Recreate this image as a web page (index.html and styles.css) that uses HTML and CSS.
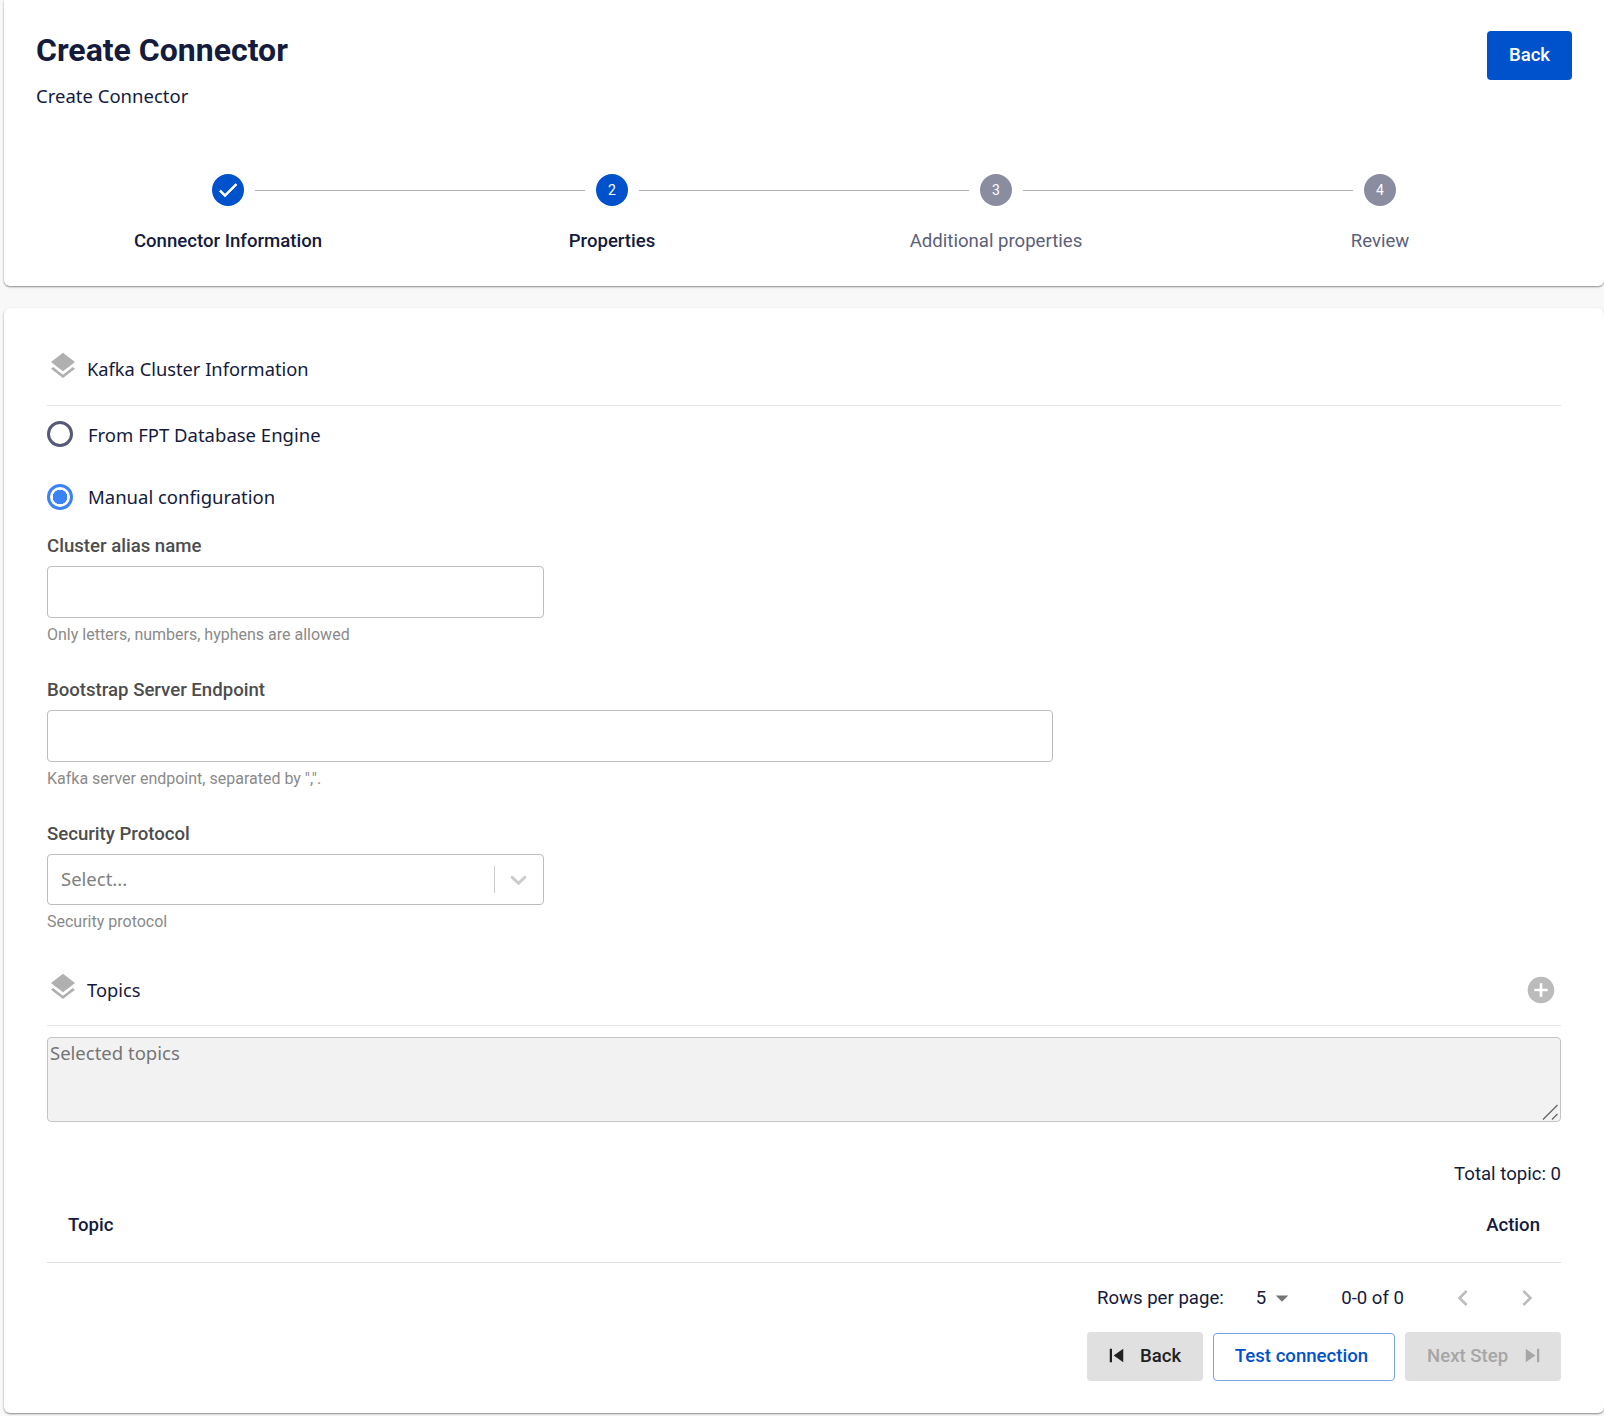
FILE: index.html
```html
<!DOCTYPE html>
<html lang="en">
<head>
    <meta charset="UTF-8">
    <meta name="viewport" content="width=device-width, initial-scale=1.0">
    <title>Create Connector</title>
    <link rel="stylesheet" href="styles.css">
</head>
<body>
    <div class="card header-card">
        <div class="page-head">
            <div>
                <h1>Create Connector</h1>
                <p class="subtitle">Create Connector</p>
            </div>
            <button type="button" class="btn btn-primary">Back</button>
        </div>

        <div class="stepper">
            <div class="step">
                <span class="step-icon active">
                    <svg width="24" height="24" viewBox="0 0 24 24"><path fill="#fff" stroke="#fff" stroke-width="0.7" d="M9 16.2 4.8 12l-1.4 1.4L9 19 21 7l-1.4-1.4z"/></svg>
                </span>
                <span class="step-label strong">Connector Information</span>
            </div>
            <div class="step">
                <span class="step-line"></span>
                <span class="step-icon active">2</span>
                <span class="step-label strong">Properties</span>
            </div>
            <div class="step">
                <span class="step-line"></span>
                <span class="step-icon">3</span>
                <span class="step-label">Additional properties</span>
            </div>
            <div class="step">
                <span class="step-line"></span>
                <span class="step-icon">4</span>
                <span class="step-label">Review</span>
            </div>
        </div>
    </div>

    <div class="card form-card">
        <div class="section-head kafka-head">
            <svg class="layers" viewBox="0 0 24 24"><path d="M11.99 18.54l-7.37-5.73L3 14.07l9 7 9-7-1.63-1.27-7.38 5.74zM12 16l7.36-5.73L21 9l-9-7-9 7 1.63 1.27L12 16z"/></svg>
            <span>Kafka Cluster Information</span>
        </div>

        <label class="radio-row first">
            <span class="radio"></span>
            From FPT Database Engine
        </label>
        <label class="radio-row second">
            <span class="radio checked"></span>
            <span class="radio-text">Manual configuration</span>
        </label>

        <div class="field">
            <label class="field-label" for="alias">Cluster alias name</label>
            <input class="text-input short" type="text" id="alias">
            <div class="helper">Only letters, numbers, hyphens are allowed</div>
        </div>

        <div class="field">
            <label class="field-label" for="endpoint">Bootstrap Server Endpoint</label>
            <input class="text-input long" type="text" id="endpoint">
            <div class="helper">Kafka server endpoint, separated by ",".</div>
        </div>

        <div class="field last">
            <div class="field-label">Security Protocol</div>
            <div class="select short">
                <span class="select-value">Select...</span>
                <span class="select-sep"></span>
                <svg class="select-arrow" viewBox="0 0 20 20"><path d="M4.516 7.548c0.436-0.446 1.043-0.481 1.576 0l3.908 3.747 3.908-3.747c0.533-0.481 1.141-0.446 1.574 0 0.436 0.445 0.408 1.197 0 1.615-0.406 0.418-4.695 4.502-4.695 4.502-0.217 0.223-0.502 0.335-0.787 0.335s-0.57-0.112-0.789-0.335c0 0-4.287-4.084-4.695-4.502s-0.436-1.17 0-1.615z"/></svg>
            </div>
            <div class="helper">Security protocol</div>
        </div>

        <div class="section-head topics-head">
            <svg class="layers" viewBox="0 0 24 24"><path d="M11.99 18.54l-7.37-5.73L3 14.07l9 7 9-7-1.63-1.27-7.38 5.74zM12 16l7.36-5.73L21 9l-9-7-9 7 1.63 1.27L12 16z"/></svg>
            <span class="grow">Topics</span>
            <svg class="add-icon" viewBox="0 0 24 24"><path d="M12 2C6.48 2 2 6.48 2 12s4.48 10 10 10 10-4.48 10-10S17.52 2 12 2zm5 11h-4v4h-2v-4H7v-2h4V7h2v4h4v2z"/></svg>
        </div>

        <div class="topics-wrap">
            <textarea class="topics-box" placeholder="Selected topics" readonly></textarea>
            <svg class="grip" width="16" height="16" viewBox="0 0 16 16"><path d="M1 15.5 15.5 1M10 15.5 15.5 10"/></svg>
        </div>

        <div class="total">Total topic: 0</div>

        <div class="table-head">
            <span>Topic</span>
            <span>Action</span>
        </div>

        <div class="pagination">
            <span>Rows per page:</span>
            <span class="rows-select">5
                <svg width="30" height="30" viewBox="0 0 24 24"><path d="M7 10l5 5 5-5z"/></svg>
            </span>
            <span class="page-count">0-0 of 0</span>
            <svg class="page-arrow" viewBox="0 0 24 24"><path d="M15.41 7.41 14 6l-6 6 6 6 1.41-1.41L10.83 12z"/></svg>
            <svg class="page-arrow next" viewBox="0 0 24 24"><path d="M10 6 8.59 7.41 13.17 12l-4.58 4.59L10 18l6-6z"/></svg>
        </div>

        <div class="actions">
            <button type="button" class="btn btn-grey">
                <svg width="27" height="27" viewBox="0 0 24 24"><path d="M6 6h2v12H6zm3.5 6 8.5 6V6z"/></svg>
                Back
            </button>
            <button type="button" class="btn btn-outline">Test connection</button>
            <button type="button" class="btn btn-disabled">
                Next Step
                <svg width="27" height="27" viewBox="0 0 24 24"><path d="m6 18 8.5-6L6 6v12zM16 6v12h2V6h-2z"/></svg>
            </button>
        </div>
    </div>
</body>
</html>
```

FILE: styles.css
```css
* {
    box-sizing: border-box;
}

body {
    margin: 0;
    padding: 0 0 0 4px;
    height: 1416px;
    overflow: hidden;
    background-color: #f8f8f8;
    font-family: Roboto, sans-serif;
    color: #141b3c;
}

.card {
    background-color: #fff;
    border-radius: 0 0 6px 6px;
    box-shadow: 0 1px 2px rgba(0, 0, 0, 0.45);
}

.header-card {
    height: 286px;
    padding: 31px 32px 0;
}

.page-head {
    display: flex;
    justify-content: space-between;
    height: 127px;
}

h1 {
    margin: 0;
    font-size: 32px;
    line-height: 38px;
    font-weight: 700;
}

.subtitle {
    margin: 13px 0 0;
    font-family: "Noto Sans", sans-serif;
    font-size: 18.5px;
    line-height: 28px;
}

.btn {
    display: flex;
    align-items: center;
    justify-content: center;
    height: 49px;
    padding: 0 0 2px;
    border: none;
    border-radius: 4px;
    font-family: Roboto, sans-serif;
    font-size: 18.6px;
    font-weight: 500;
}

.btn-primary {
    width: 85px;
    background-color: #0052cc;
    color: #fff;
}

.stepper {
    display: grid;
    grid-template-columns: repeat(4, 384px);
    height: 100px;
}

.step {
    position: relative;
    display: flex;
    flex-direction: column;
    align-items: center;
    padding-top: 16px;
}

.step-line {
    position: absolute;
    top: 32px;
    left: calc(-50% + 27px);
    right: calc(50% + 27px);
    border-top: 1px solid #b3b3b3;
}

.step-icon {
    display: flex;
    align-items: center;
    justify-content: center;
    width: 32px;
    height: 32px;
    border-radius: 50%;
    background-color: #8a8d9f;
    color: #fff;
    font-size: 14px;
}

.step-icon.active {
    background-color: #0052cc;
}

.step-label {
    margin-top: 24px;
    font-size: 18.6px;
    line-height: 22px;
    color: #5b5f7a;
}

.step-label.strong {
    font-weight: 500;
    color: #141b3c;
}

.form-card {
    height: 1105px;
    margin-top: 22px;
    padding: 0 43px;
    border-radius: 6px;
}

.section-head {
    display: flex;
    align-items: center;
    border-bottom: 1px solid #e6e6e6;
    font-family: "Noto Sans", sans-serif;
    font-size: 18.3px;
}

.kafka-head {
    height: 98px;
    padding-top: 24px;
}

.topics-head {
    height: 70px;
    padding-bottom: 2px;
}

.section-head span {
    margin-left: 8px;
}

.layers {
    width: 32px;
    height: 32px;
    margin-bottom: 6px;
    fill: #b0b0b0;
}

.grow {
    flex: 1;
}

.add-icon {
    width: 32px;
    height: 32px;
    margin-right: 4px;
    fill: #bbb;
}

.radio-row {
    display: flex;
    align-items: center;
    gap: 15px;
    height: 26px;
    font-family: "Noto Sans", sans-serif;
    font-size: 18.5px;
}

.radio-row.first {
    margin-top: 15px;
}

.radio-row.second {
    margin-top: 37px;
}

.radio-text {
    margin-bottom: 2px;
}

.radio {
    display: block;
    width: 26px;
    height: 26px;
    border: 3px solid #565a78;
    border-radius: 50%;
}

.radio.checked {
    border-color: #3b82f6;
    background: radial-gradient(circle, #3b82f6 0 7px, #fff 7.5px);
}

.field {
    height: 144px;
}

.field.last {
    height: 134px;
}

.radio-row + .field {
    margin-top: 24px;
}

.field-label {
    display: block;
    height: 24px;
    font-size: 18.6px;
    line-height: 24px;
    font-weight: 500;
    color: #4d4d4d;
}

.text-input {
    display: block;
    height: 52px;
    margin-top: 8px;
    border: 1px solid #bdbdbd;
    border-radius: 4px;
    background: #fff;
}

.short {
    width: 497px;
}

.long {
    width: 1006px;
}

.helper {
    margin-top: 7px;
    font-size: 16px;
    line-height: 20px;
    color: #8a8a8a;
}

.select {
    display: flex;
    align-items: center;
    height: 51px;
    margin-top: 8px;
    padding: 0 11px 0 13px;
    border: 1px solid #bdbdbd;
    border-radius: 4px;
}

.select-value {
    flex: 1;
    padding-bottom: 2px;
    font-family: "Noto Sans", sans-serif;
    font-size: 18.5px;
    color: #808080;
}

.select-sep {
    width: 1px;
    height: 27px;
    margin-right: 10px;
    background-color: #ccc;
}

.select-arrow {
    width: 27px;
    height: 27px;
    fill: #ccc;
}

.topics-wrap {
    position: relative;
    height: 85px;
    margin-top: 11px;
}

.topics-box {
    display: block;
    width: 100%;
    height: 85px;
    padding: 2px;
    border: 1px solid #c4c4c4;
    border-radius: 4px;
    background-color: #f2f2f2;
    font-family: "Noto Sans", sans-serif;
    font-size: 18.5px;
    resize: none;
    outline: none;
}

.topics-box::placeholder {
    color: #757575;
}

.grip {
    position: absolute;
    right: 3px;
    bottom: 2px;
    fill: none;
    stroke: #666;
    stroke-width: 1.3;
}

.total {
    margin-top: 40px;
    text-align: right;
    font-size: 18.6px;
    line-height: 24px;
}

.table-head {
    display: flex;
    justify-content: space-between;
    height: 77px;
    padding: 27px 21px 0;
    border-bottom: 1px solid #e0e0e0;
    font-size: 18.6px;
    line-height: 24px;
    font-weight: 500;
}

.pagination {
    display: flex;
    align-items: center;
    justify-content: flex-end;
    height: 69px;
    font-size: 18.6px;
}

.rows-select {
    display: flex;
    align-items: center;
    margin-left: 32px;
}

.rows-select svg {
    margin-left: 1px;
    fill: #757575;
}

.page-count {
    margin-left: 44px;
}

.page-arrow {
    width: 32px;
    height: 32px;
    margin-left: 43px;
    fill: #bdbdbd;
}

.page-arrow.next {
    margin-left: 32px;
    margin-right: 18px;
}

.actions {
    display: flex;
    justify-content: flex-end;
    gap: 10px;
}

.btn-grey {
    justify-content: flex-start;
    width: 116px;
    gap: 10px;
    padding-left: 16px;
    background-color: #e0e0e0;
    color: #212121;
}

.btn-outline {
    width: 182px;
    height: 48px;
    margin-top: 1px;
    padding-right: 5px;
    border: 1px solid #7ba0e4;
    background-color: #fff;
    color: #0052cc;
}

.btn-disabled {
    justify-content: flex-start;
    width: 156px;
    gap: 11px;
    padding-left: 22px;
    background-color: #e0e0e0;
    color: #a6a6a6;
}

.btn svg {
    fill: currentColor;
}
```
